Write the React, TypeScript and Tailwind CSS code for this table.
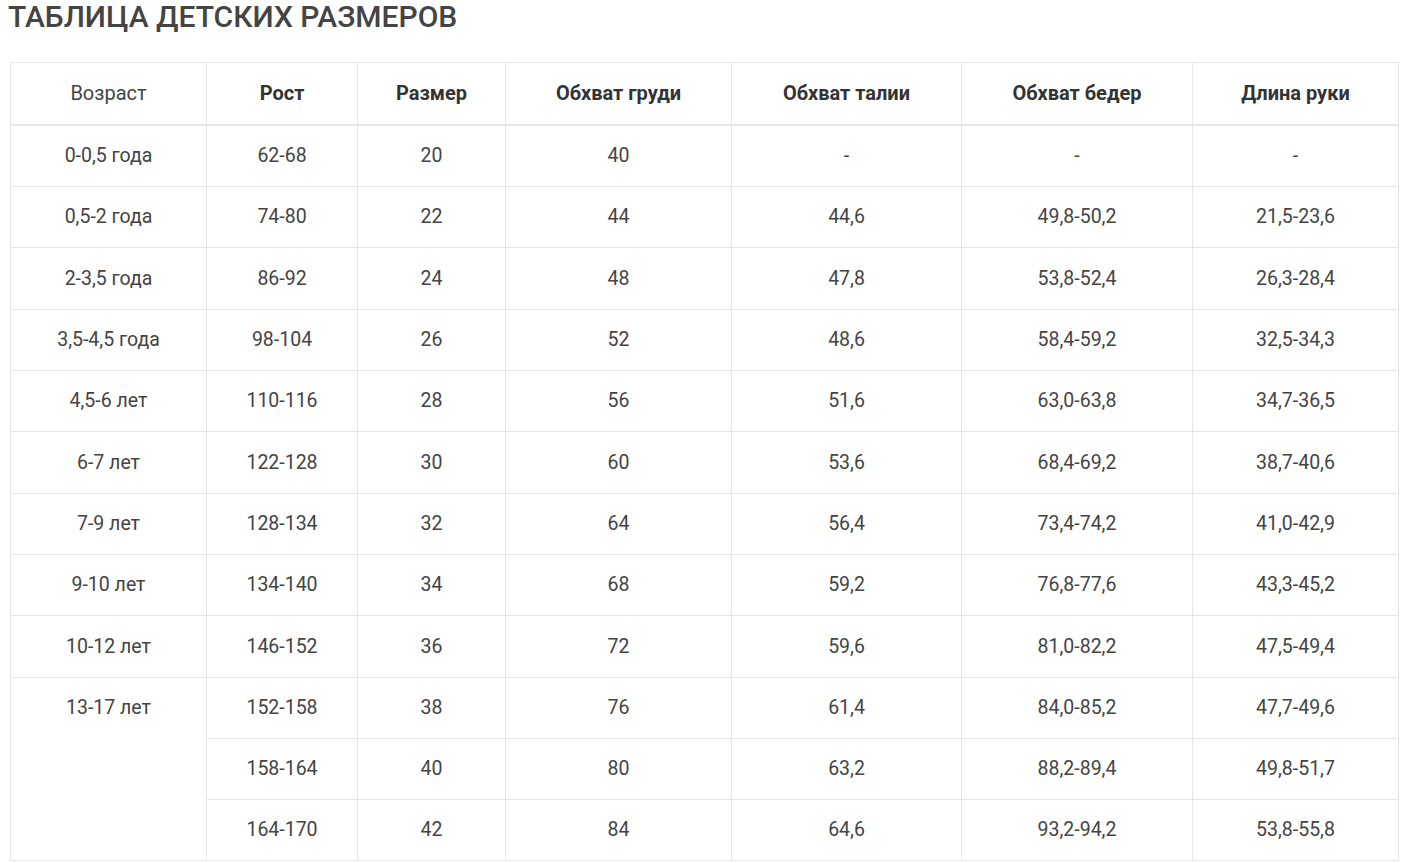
import React from 'react';

type Row = {
  age?: string;
  span?: number;
  h: string;
  cells: string[];
};

const rows: Row[] = [
  { age: '0-0,5 года', h: 'h-[62px]', cells: ['62-68', '20', '40', '-', '-', '-'] },
  { age: '0,5-2 года', h: 'h-[61px]', cells: ['74-80', '22', '44', '44,6', '49,8-50,2', '21,5-23,6'] },
  { age: '2-3,5 года', h: 'h-[62px]', cells: ['86-92', '24', '48', '47,8', '53,8-52,4', '26,3-28,4'] },
  { age: '3,5-4,5 года', h: 'h-[61px]', cells: ['98-104', '26', '52', '48,6', '58,4-59,2', '32,5-34,3'] },
  { age: '4,5-6 лет', h: 'h-[61px]', cells: ['110-116', '28', '56', '51,6', '63,0-63,8', '34,7-36,5'] },
  { age: '6-7 лет', h: 'h-[62px]', cells: ['122-128', '30', '60', '53,6', '68,4-69,2', '38,7-40,6'] },
  { age: '7-9 лет', h: 'h-[61px]', cells: ['128-134', '32', '64', '56,4', '73,4-74,2', '41,0-42,9'] },
  { age: '9-10 лет', h: 'h-[61px]', cells: ['134-140', '34', '68', '59,2', '76,8-77,6', '43,3-45,2'] },
  { age: '10-12 лет', h: 'h-[62px]', cells: ['146-152', '36', '72', '59,6', '81,0-82,2', '47,5-49,4'] },
  { age: '13-17 лет', span: 3, h: 'h-[61px]', cells: ['152-158', '38', '76', '61,4', '84,0-85,2', '47,7-49,6'] },
  { h: 'h-[61px]', cells: ['158-164', '40', '80', '63,2', '88,2-89,4', '49,8-51,7'] },
  { h: 'h-[61px]', cells: ['164-170', '42', '84', '64,6', '93,2-94,2', '53,8-55,8'] },
];

const headers = ['Рост', 'Размер', 'Обхват груди', 'Обхват талии', 'Обхват бедер', 'Длина руки'];

export default function App() {
  return (
    <div className="w-[1404px] h-[863px] bg-white overflow-hidden font-['Roboto',_'Liberation_Sans',_sans-serif] text-[#444]">
      {/* Heading */}
      <h1 className="pl-[8px] h-[34px] text-[30px] leading-[34px] font-medium text-[#444]">
        ТАБЛИЦА ДЕТСКИХ РАЗМЕРОВ
      </h1>

      <div className="pl-[10px] pt-[28px]">
        <table className="w-[1388px] table-fixed border-collapse text-[19.5px] leading-[24px] text-center">
          <colgroup>
            <col className="w-[196px]" />
            <col className="w-[151px]" />
            <col className="w-[148px]" />
            <col className="w-[226px]" />
            <col className="w-[230px]" />
            <col className="w-[231px]" />
            <col className="w-[206px]" />
          </colgroup>
          <thead>
            <tr className="h-[62px]">
              <th className="border border-[#e6e6e6] border-b-2 text-[20px] font-normal text-[#444]">Возраст</th>
              {headers.map((h) => (
                <th key={h} className="border border-[#e6e6e6] border-b-2 text-[20px] font-bold text-[#333]">
                  {h}
                </th>
              ))}
            </tr>
          </thead>
          <tbody>
            {rows.map((r, i) => (
              <tr key={i} className={r.h}>
                {r.age && (
                  <td
                    rowSpan={r.span}
                    className={
                      r.span
                        ? 'border border-[#e6e6e6] align-top pt-[18px]'
                        : 'border border-[#e6e6e6] align-middle'
                    }
                  >
                    {r.age}
                  </td>
                )}
                {r.cells.map((c, j) => (
                  <td key={j} className="border border-[#e6e6e6] align-middle">
                    {c}
                  </td>
                ))}
              </tr>
            ))}
          </tbody>
        </table>
      </div>
    </div>
  );
}
